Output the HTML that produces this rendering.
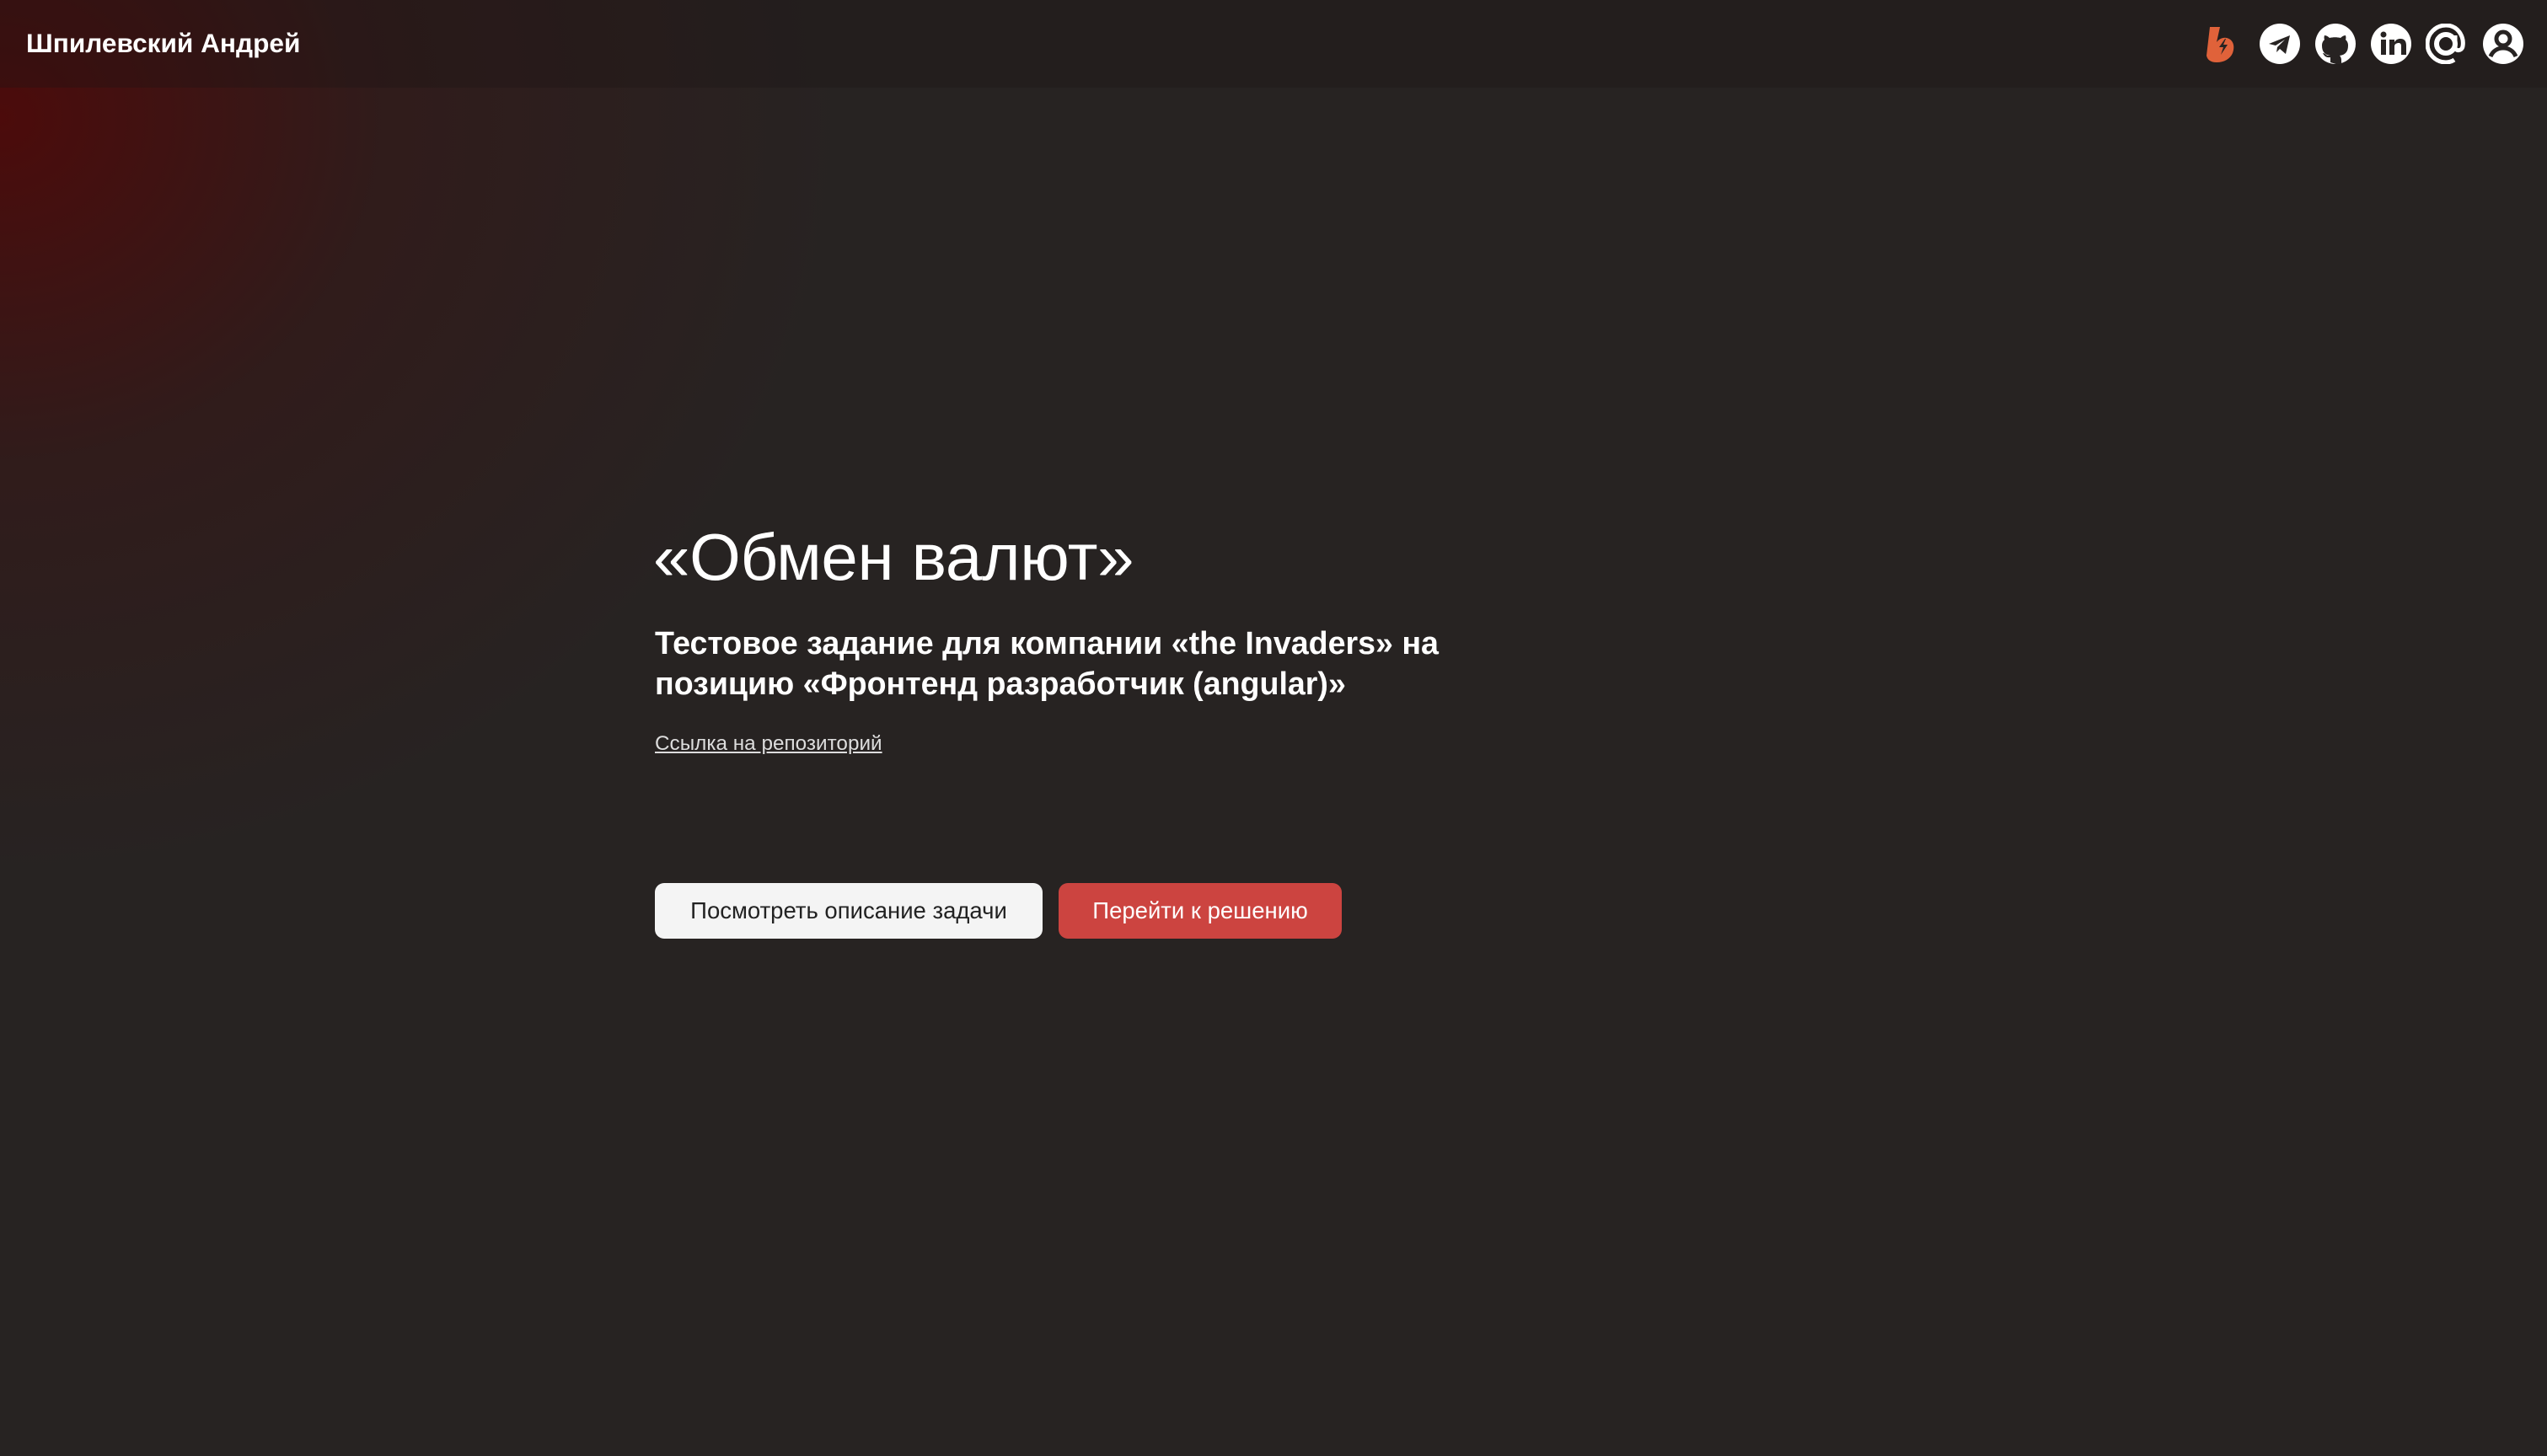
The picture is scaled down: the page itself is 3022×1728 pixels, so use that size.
<!DOCTYPE html>
<html><head><meta charset="utf-8"><style>
html,body{margin:0;padding:0}
body{width:3022px;height:1728px;overflow:hidden;background:#272322;font-family:"Liberation Sans",sans-serif;color:#fff;position:relative}
.glow{position:absolute;left:0;top:0;width:3022px;height:1728px;background:radial-gradient(ellipse 1000px 900px at 0px 140px,rgba(85,5,5,0.8),rgba(70,10,10,0.3) 45%,rgba(39,35,34,0) 100%)}
.hdr{position:absolute;left:0;top:0;width:3022px;height:104px;background:rgba(25,20,20,0.3)}
.name{position:absolute;left:31px;top:33px;font-size:31.6px;font-weight:bold}
.ic{position:absolute;top:28px;width:48px;height:48px}
h1{position:absolute;left:775px;top:616px;margin:0;font-size:78px;font-weight:normal;letter-spacing:-0.3px}
.sub{position:absolute;left:777px;top:739px;width:1050px;font-size:37.6px;font-weight:bold;line-height:48px}
.link{position:absolute;left:777px;top:869px;font-size:24.3px;color:#ddd;text-decoration:underline}
.btn{position:absolute;top:1048px;height:66px;border-radius:11px;font-size:27.5px;line-height:66px;text-align:center}
</style></head><body>
<div class="glow"></div>
<div class="hdr"></div>
<div class="name">Шпилевский Андрей</div>
<svg class="ic" style="left:2614px" viewBox="0 0 48 48"><path d="M8 4h12l-4 18c3-4 8-6 12-5 8 2 10 10 7 18-3 7-10 11-19 11-7 0-11-3-12-8z" fill="#e0623a"/><path d="M26 18l-7 10h5l-3 9 8-12h-5l3-7z" fill="#272322"/></svg>
<svg class="ic" style="left:2681px" viewBox="0 0 48 48"><circle cx="24" cy="24" r="24" fill="#fff"/><path d="M11 24l25-10-5 22-7-6-4 4 1-6 9-9-11 7z" fill="#272322"/></svg>
<svg class="ic" style="left:2747px" viewBox="0 0 48 48"><circle cx="24" cy="24" r="24" fill="#fff"/><path d="M18 46v-6c-6 1-8-3-9-5 3 0 4 3 6 3h3c-7-1-10-5-10-12 0-3 1-5 3-7-1-2 0-5 0-5 2 0 4 1 6 3 4-1 9-1 13 0 2-2 4-3 6-3 0 0 1 3 0 5 2 2 3 4 3 7 0 7-3 11-10 12 1 1 2 3 2 5v7z" fill="#272322"/></svg>
<svg class="ic" style="left:2813px" viewBox="0 0 48 48"><circle cx="24" cy="24" r="24" fill="#fff"/><rect x="12" y="19" width="6" height="18" fill="#272322"/><circle cx="15" cy="13" r="3.5" fill="#272322"/><path d="M22 19h6v3c2-3 4-4 7-4 5 0 7 3 7 8v11h-6V27c0-3-1-4-3-4s-5 1-5 4v10h-6z" fill="#272322"/></svg>
<svg class="ic" style="left:2878px" viewBox="0 0 48 48"><circle cx="24" cy="24" r="11" fill="none" stroke="#fff" stroke-width="6"/><path d="M35 14v14c0 5 8 5 9-1 2-12-6-25-20-25C12 2 2 12 2 24s10 22 22 22c4 0 7-1 10-3" fill="none" stroke="#fff" stroke-width="5"/></svg>
<svg class="ic" style="left:2946px" viewBox="0 0 48 48"><circle cx="24" cy="24" r="24" fill="#fff"/><circle cx="24" cy="18" r="8" fill="none" stroke="#272322" stroke-width="5"/><path d="M9 39c3-7 9-10 15-10s12 3 15 10" fill="none" stroke="#272322" stroke-width="5"/></svg>
<h1>«Обмен валют»</h1>
<div class="sub">Тестовое задание для компании «the Invaders» на<br>позицию «Фронтенд разработчик (angular)»</div>
<div class="link">Ссылка на репозиторий</div>
<div class="btn" style="left:777px;width:460px;background:#f4f4f4;color:#222">Посмотреть описание задачи</div>
<div class="btn" style="left:1256px;width:336px;background:#cc4440;color:#fff">Перейти к решению</div>
</body></html>
